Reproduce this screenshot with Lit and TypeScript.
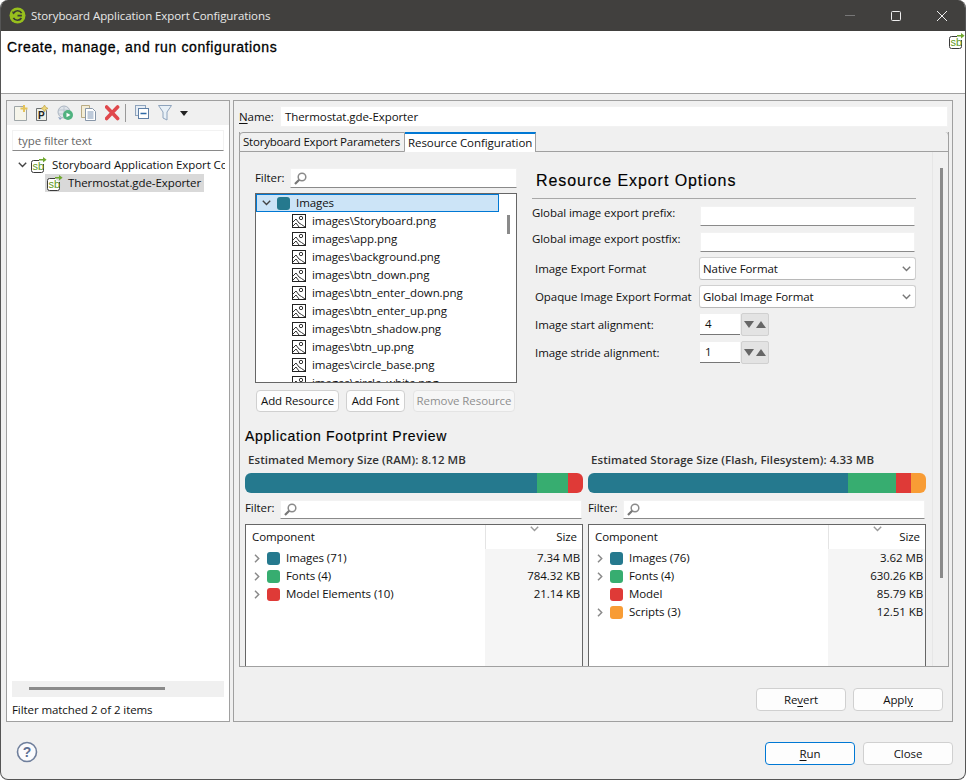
import { LitElement, html, css, svg } from "lit";
import { customElement } from "lit/decorators.js";

const TEAL = "#25798e", GREEN = "#37ad70", RED = "#df3a37", ORANGE = "#f89c35";

const sbIcon = () => svg`<svg class="ico16" width="16" height="16" viewBox="0 0 16 16">
  <path d="M8 3.5H2.5a2 2 0 0 0-2 2v8a2 2 0 0 0 2 2h8a2 2 0 0 0 2-2V7" fill="#fff" stroke="#3a3a3a"/>
  <text x="1.5" y="13.4" font-family="Liberation Sans" font-size="11" fill="#5f9a26">sb</text>
  <path d="M8 2.8h5" stroke="#6fa82e" stroke-width="1.6"/><path d="M12 0l3.6 2.8L12 5.6z" fill="#6fa82e"/>
</svg>`;
const search = () => svg`<svg class="mag" width="13" height="13" viewBox="0 0 13 13">
  <circle cx="8" cy="5" r="3.8" fill="none" stroke="#8a8a8a" stroke-width="1.5"/>
  <path d="M5.2 7.8L1 12" stroke="#777" stroke-width="2.2"/></svg>`;
const chevDown = (c = "#444") => svg`<svg width="9" height="6" viewBox="0 0 9 6"><path d="M.8 .8l3.7 3.7L8.2 .8" fill="none" stroke="${c}" stroke-width="1.4"/></svg>`;
const chevRight = () => svg`<svg width="6" height="9" viewBox="0 0 6 9"><path d="M1 .8l3.7 3.7L1 8.2" fill="none" stroke="#8a8a8a" stroke-width="1.5"/></svg>`;
const imgIcon = () => svg`<svg width="14" height="14" viewBox="0 0 14 14">
  <rect x=".5" y=".5" width="13" height="13" fill="#fff" stroke="#222"/>
  <circle cx="9" cy="4" r="1.7" fill="none" stroke="#333"/>
  <path d="M1 8l3-3 3 4 2.5 1.5L13 13M1 12l3-3 3 4" fill="none" stroke="#333"/></svg>`;

@customElement("app-root")
export class AppRoot extends LitElement {
  static styles = css`
    :host { display: block; width: 966px; height: 780px; background: #fff; color: #111;
      font-family: "Open Sans", "Noto Sans", sans-serif; font-size: 11.5px; line-height: 16px; letter-spacing: -.08px; }
    * { box-sizing: border-box; }
    svg { display: block; flex: none; }
    .window { width: 966px; height: 780px; border: 1px solid #555; border-top: 0; border-radius: 8px;
      overflow: hidden; background: #f0f0f0; display: flex; flex-direction: column; }
    .titlebar { height: 31px; flex: none; background: #41403e; color: #e8e8e8; display: flex; align-items: center; padding-left: 8px; }
    .titlebar .ttl { margin-left: 5px; }
    .ctrls { margin-left: auto; display: flex; }
    .ctrl { width: 46px; height: 31px; display: flex; align-items: center; justify-content: center; }
    .head { height: 63px; flex: none; background: #fff; border-bottom: 1px solid #a0a0a0; display: flex;
      justify-content: space-between; padding: 7px 0 0 6px; }
    .head svg { margin-top: -5px; }
    .head-t { font-family: "Liberation Sans", sans-serif; font-size: 14px; line-height: 18px; letter-spacing: .62px;
      color: #000; -webkit-text-stroke: .3px #000; }
    .body { height: 628px; flex: none; padding: 6px 12px 0 5px; display: flex; gap: 3px; }
    .left { width: 224px; background: #fff; border: 1px solid #a0a0a0; display: flex; flex-direction: column; }
    .tb { height: 24px; flex: none; background: #f0f0f0; display: flex; align-items: center; padding-left: 6px; }
    .tb .sep { width: 1px; height: 18px; background: #999; }
    .tb .coll { margin-left: 9px; }
    .in { background: #fff; border: 1px solid #f2f2f2; border-bottom: 1px solid #8a8a8a; height: 20px; display: flex; align-items: center; }
    .ftxt { margin: 5px 5px 0 5px; height: 21px; padding-left: 5px; color: #666; }
    .tree { flex: 1; padding: 5px 5px 0 11px; overflow: hidden; }
    .tr { height: 18px; display: flex; align-items: center; white-space: nowrap; }
    .tr .tw { width: 13px; flex: none; }
    .tr span.t { margin-left: 5px; }
    .tr2 { margin-left: 27px; width: 159px; background: #d9d9d9; padding-left: 2px; }
    .clip { overflow: hidden; width: 207px; }
    .hs { margin: 0 5px; height: 16px; flex: none; background: #f0f0f0; padding: 6px 0 0 17px; }
    .hs i { display: block; width: 136px; height: 3px; background: #8a8a8a; }
    .stat { height: 24px; flex: none; display: flex; align-items: center; padding: 2px 0 0 5px; }
    .right { width: 720px; background: #f0f0f0; border: 1px solid #a0a0a0; display: flex; flex-direction: column; padding: 5px 4px 0 5px; }
    .nm { display: flex; height: 21px; align-items: center; flex: none; }
    .nm label { width: 41px; }
    .nm .in { flex: 1; height: 21px; padding-left: 4px; border-bottom-color: #f2f2f2; }
    u { text-underline-offset: 2px; }
    .folder { margin-top: 5px; height: 535px; flex: none; width: 710px; display: flex; flex-direction: column;
      border: 1px solid #a0a0a0; border-top: 0; }
    .tabs { display: flex; height: 20px; flex: none; margin: 0 -1px; }
    .tab { height: 20px; display: flex; align-items: center; white-space: nowrap; }
    .tab1 { width: 166px; padding-left: 3px; letter-spacing: -.22px; background: #f0f0f0; border: 1px solid #a0a0a0; border-radius: 4px 0 0 0; }
    .tab2 { width: 131px; padding-left: 3px; background: #fff; border-top: 2px solid #0078d4; border-right: 1px solid #a0a0a0; }
    .tabfill { flex: 1; border-bottom: 1px solid #a0a0a0; border-right: 1px solid #a0a0a0; border-top-right-radius: 4px; }
    .fbody { flex: 1; display: flex; min-height: 0; overflow: hidden; }
    .scroll { flex: none; width: 692px; padding: 16px 0 0 5px; overflow: hidden; }
    .vbar { flex: 1; border-left: 1px solid #e6e6e6; padding: 16px 0 0 7px; }
    .vbar i { display: block; width: 3px; height: 410px; background: #8a8a8a; }
    .upper { display: grid; grid-template-columns: 262px 384px; column-gap: 15px; padding-left: 10px; }
    .fl { display: flex; align-items: center; height: 20px; }
    .fl label { width: 35px; }
    .fl .in { flex: 1; padding-left: 3px; }
    .list { margin-top: 5px; height: 190px; border: 1px solid #666; background: #fff; overflow: hidden; position: relative; }
    .lrow { height: 18px; display: flex; align-items: center; white-space: nowrap; }
    .lsel { width: 243px; background: #cce4f7; outline: 1px solid #0078d4; outline-offset: -1px; padding-left: 6px; }
    .lsel .sw { margin-left: 6px; margin-right: 6px; }
    .lch { padding-left: 36px; }
    .lch span { margin-left: 6px; }
    .sw { width: 13px; height: 13px; border-radius: 3px; flex: none; }
    .thumb { position: absolute; left: 251px; top: 21px; width: 3px; height: 19px; background: #8a8a8a; }
    .btns { display: flex; margin-top: 7px; padding-left: 1px; }
    .btn { height: 22px; border: 1px solid #d0d0d0; border-radius: 4px; background: #fdfdfd; display: flex; align-items: center; justify-content: center; }
    .b1 { width: 83px; } .b2 { width: 59px; margin-left: 7px; }
    .b3 { width: 102px; margin-left: 8px; color: #8f8f8f; background: #f6f6f6; border-color: #e4e4e4; }
    .h2 { height: 31px; border-bottom: 1px solid #a8a8a8; padding: 4px 0 0 4px; font-family: "Liberation Sans", sans-serif;
      font-size: 16px; line-height: 18px; letter-spacing: .94px; color: #000; -webkit-text-stroke: .15px #000; }
    .frow { display: grid; grid-template-columns: 168px 215px; align-items: center; }
    .frow .in { height: 20px; }
    .frow.t span { align-self: start; margin-top: -1px; }
    .r1 { margin-top: 7px; } .r2 { margin-top: 6px; }
    .frow.c { grid-template-columns: 167px 217px; height: 23px; margin-top: 5px; }
    .lbl3 { padding-left: 3px; }
    .combo { height: 23px; border: 1px solid #d0d0d0; border-bottom-color: #b8b8b8; border-radius: 3px; background: #fff; display: flex; align-items: center;
      justify-content: space-between; padding: 0 4px 0 3px; }
    .frow.s { grid-template-columns: 168px 40px 29px; height: 23px; margin-top: 5px; }
    .sin { height: 21px; background: #fff; border-bottom: 1px solid #777; padding-left: 5px; display: flex; align-items: center; }
    .sbtn { height: 23px; margin-left: 1px; background: #e3e3e3; border: 1px solid #d0d0d0; border-radius: 2px; display: flex; align-items: center; justify-content: center; gap: 2px; }
    .fp { margin-top: 16px; font-family: "Liberation Sans", sans-serif; font-size: 14px; line-height: 16px; letter-spacing: .72px;
      color: #000; -webkit-text-stroke: .15px #000; }
    .cols { display: grid; grid-template-columns: 338px 338px; column-gap: 5px; margin-top: 8px; }
    .est { padding-left: 3px; height: 16px; font-weight: 600; color: #333; letter-spacing: .06px; }
    .bar { margin-top: 5px; height: 20px; border-radius: 6px; overflow: hidden; display: flex; }
    .bar i { display: block; height: 20px; }
    .col .fl { margin-top: 6px; }
    .col .fl label { padding-bottom: 2px; }
    .col .fl .in { margin-right: 1px; height: 19px; }
    .tbl { margin-top: 5px; height: 170px; border: 1px solid #666; background: #fff; display: grid;
      grid-template-columns: 239px 97px; grid-template-rows: 24px 1fr; }
    .th1 { display: flex; align-items: center; padding-left: 6px; }
    .th2 { border-left: 1px solid #e4e4e4; display: flex; align-items: center; justify-content: flex-end; padding-right: 5px; position: relative; }
    .sort { position: absolute; left: 44px; top: 1px; }
    .tc2 { background: #f5f5f5; text-align: right; padding-right: 2px; }
    .row { height: 18px; display: flex; align-items: center; padding-left: 8px; white-space: nowrap; }
    .row .x { width: 13px; flex: none; }
    .row .sw { margin-right: 6px; }
    .val { height: 18px; line-height: 18px; }
    .act { display: flex; justify-content: flex-end; gap: 7px; padding: 21px 5px 0 0; }
    .act .btn { width: 90px; height: 23px; }
    .foot { flex: 1; display: flex; align-items: flex-start; padding: 20px 12px 0 15px; }
    .foot svg { margin-top: -1px; }
    .foot .sp { flex: 1; }
    .foot .btn { width: 90px; height: 23px; }
    .run { border-color: #0078d4 !important; margin-right: 8px; border-width: 1.5px; }
  `;

  render() {
    const files = ["Storyboard","app","background","btn_down","btn_enter_down","btn_enter_up","btn_shadow","btn_up","circle_base","circle_white"];
    return html`<div class="window">
      <div class="titlebar">
        <svg width="17" height="17" viewBox="0 0 17 17"><circle cx="8.5" cy="8.5" r="8" fill="#97bf1d"/>
          <path d="M12.6 6.2A4.6 4.6 0 0 0 4.6 6M4.4 10.8a4.6 4.6 0 0 0 8 .2M8.5 8.7h4.4" fill="none" stroke="#3a3a34" stroke-width="1.7"/>
          <path d="M3 4.6l3.6.4-2.4 2.6z" fill="#3a3a34"/></svg>
        <span class="ttl">Storyboard Application Export Configurations</span>
        <div class="ctrls">
          <div class="ctrl"><svg width="10" height="1"><rect width="10" height="1" fill="#777"/></svg></div>
          <div class="ctrl"><svg width="10" height="10"><rect x=".5" y=".5" width="9" height="9" rx="1" fill="none" stroke="#eee"/></svg></div>
          <div class="ctrl"><svg width="10" height="10"><path d="M0 0l10 10M10 0L0 10" stroke="#eee"/></svg></div>
        </div>
      </div>
      <div class="head"><span class="head-t">Create, manage, and run configurations</span>${sbIcon()}</div>
      <div class="body">
        <div class="left">
          <div class="tb">
            <svg width="22" height="16" viewBox="0 0 22 16"><path d="M1.5 1.5h9l3 3v11h-12z" fill="#f6f5ea" stroke="#9fa6a8"/><path d="M11 0v7M7.5 3.5h7" stroke="#e4c35a" stroke-width="2"/></svg>
            <svg width="22" height="16" viewBox="0 0 22 16"><path d="M1.5 3.5h8l2 2v10h-10z" fill="#eef0e8" stroke="#6c7072"/><text x="3" y="13.5" font-family="Liberation Sans" font-size="10" font-weight="700" fill="#222">P</text><path d="M9.5 0l1.2 2.2L13 3.4l-2.3 1.2L9.5 7 8.3 4.6 6 3.4l2.3-1.2z" fill="#eed67a" stroke="#b99a36" stroke-width=".6"/></svg>
            <svg width="24" height="16" viewBox="0 0 24 16"><circle cx="7" cy="7" r="6" fill="#dfe4ea" stroke="#aab4c0"/><path d="M2 5h10M2 9h10M7 1v12" stroke="#bdc6d0"/><circle cx="11" cy="10" r="5" fill="#4fb27f"/><path d="M9.5 7.8l4 2.2-4 2.2z" fill="#fff"/><path d="M1 12l4 1-2 2z" fill="#8ea3c2"/></svg>
            <svg width="24" height="16" viewBox="0 0 24 16"><path d="M.5 .5h8v12h-8z" fill="#f4edd6" stroke="#b9ab84"/><path d="M4.5 3.5h7l3 3v9h-10z" fill="#fff" stroke="#8796a8"/><path d="M6.5 7h6M6.5 9h6M6.5 11h6M6.5 13h6" stroke="#7f96b5"/></svg>
            <svg width="20" height="16" viewBox="0 0 20 16"><path d="M1.6 2l11 11.5M12.6 2L1.6 13.5" stroke="#e0484c" stroke-width="3.6" stroke-linecap="round"/></svg>
            <div class="sep"></div>
            <svg class="coll" width="23" height="16" viewBox="0 0 23 16"><rect x=".5" y=".5" width="10" height="10" fill="#e6edf5" stroke="#8ea3bc"/><rect x="3.5" y="3.5" width="10" height="10" fill="#fff" stroke="#5f7fa6"/><path d="M5.5 8.5h6" stroke="#2f6aa6" stroke-width="1.3"/></svg>
            <svg width="22" height="16" viewBox="0 0 22 16"><path d="M.5 .5h13L9 7v8l-4-2V7z" fill="#e8f0f7" stroke="#8ea3bc"/></svg>
            <svg width="8" height="5" viewBox="0 0 8 5"><path d="M0 0h8L4 5z" fill="#222"/></svg>
          </div>
          <div class="in ftxt">type filter text</div>
          <div class="tree clip2">
            <div class="tr clip"><div class="tw">${chevDown()}</div>${sbIcon()}<span class="t">Storyboard Application Export Configurations</span></div>
            <div class="tr tr2">${sbIcon()}<span class="t">Thermostat.gde-Exporter</span></div>
          </div>
          <div class="hs"><i></i></div>
          <div class="stat">Filter matched 2 of 2 items</div>
        </div>
        <div class="right">
          <div class="nm"><label><u>N</u>ame:</label><div class="in">Thermostat.gde-Exporter</div></div>
          <div class="folder">
            <div class="tabs"><div class="tab tab1">Storyboard Export Parameters</div><div class="tab tab2">Resource Configuration</div><div class="tabfill"></div></div>
            <div class="fbody">
              <div class="scroll">
                <div class="upper">
                  <div>
                    <div class="fl"><label>Filter:</label><div class="in">${search()}</div></div>
                    <div class="list">
                      <div class="lrow lsel">${chevDown()}<div class="sw" style="background:${TEAL}"></div>Images</div>
                      ${files.map(f => html`<div class="lrow lch">${imgIcon()}<span>images\\${f}.png</span></div>`)}
                      <div class="thumb"></div>
                    </div>
                    <div class="btns"><div class="btn b1">Add Resource</div><div class="btn b2">Add Font</div><div class="btn b3">Remove Resource</div></div>
                  </div>
                  <div>
                    <div class="h2">Resource Export Options</div>
                    <div class="frow t r1"><span>Global image export prefix:</span><div class="in"></div></div>
                    <div class="frow t r2"><span>Global image export postfix:</span><div class="in"></div></div>
                    <div class="frow c"><span class="lbl3">Image Export Format</span><div class="combo">Native Format ${chevDown("#777")}</div></div>
                    <div class="frow c"><span class="lbl3">Opaque Image Export Format</span><div class="combo">Global Image Format ${chevDown("#777")}</div></div>
                    ${[["Image start alignment:","4"],["Image stride alignment:","1"]].map(([l,v]) => html`
                      <div class="frow s"><span class="lbl3">${l}</span><div class="sin">${v}</div><div class="sbtn">
                        <svg width="10" height="7"><path d="M0 0h10L5 7z" fill="#666"/></svg>
                        <svg width="10" height="7"><path d="M0 7h10L5 0z" fill="#666"/></svg></div></div>`)}
                  </div>
                </div>
                <div class="fp">Application Footprint Preview</div>
                <div class="cols">
                  ${this.col("Estimated Memory Size (RAM): 8.12 MB", [[292,TEAL],[31,GREEN],[15,RED]], [
                    [TEAL,"Images (71)","7.34 MB",1],[GREEN,"Fonts (4)","784.32 KB",1],[RED,"Model Elements (10)","21.14 KB",1]])}
                  ${this.col("Estimated Storage Size (Flash, Filesystem): 4.33 MB", [[260,TEAL],[48,GREEN],[15,RED],[15,ORANGE]], [
                    [TEAL,"Images (76)","3.62 MB",1],[GREEN,"Fonts (4)","630.26 KB",1],[RED,"Model","85.79 KB",0],[ORANGE,"Scripts (3)","12.51 KB",1]])}
                </div>
              </div>
              <div class="vbar"><i></i></div>
            </div>
          </div>
          <div class="act"><div class="btn">Re<u>v</u>ert</div><div class="btn">Appl<u>y</u></div></div>
        </div>
      </div>
      <div class="foot">
        <svg width="22" height="22" viewBox="0 0 22 22"><circle cx="11" cy="11" r="9.5" fill="#fbfbfd" stroke="#6f7f9c" stroke-width="1.6"/><text x="11" y="16" text-anchor="middle" font-family="Liberation Sans" font-size="14" font-weight="700" fill="#5f7093">?</text></svg>
        <div class="sp"></div>
        <div class="btn run"><u>R</u>un</div><div class="btn">Close</div>
      </div>
    </div>`;
  }

  col(title: string, segs: any[], rows: any[]) {
    return html`<div class="col">
      <div class="est">${title}</div>
      <div class="bar">${segs.map(([w, c]) => html`<i style="width:${w}px;background:${c}"></i>`)}</div>
      <div class="fl"><label>Filter:</label><div class="in">${search()}</div></div>
      <div class="tbl">
        <div class="th1">Component</div>
        <div class="th2"><span class="sort">${chevDown("#999")}</span>Size</div>
        <div class="tc1">${rows.map(([c, t, , e]) => html`<div class="row"><div class="x">${e ? chevRight() : ""}</div><div class="sw" style="background:${c}"></div>${t}</div>`)}</div>
        <div class="tc2">${rows.map(([, , v]) => html`<div class="val">${v}</div>`)}</div>
      </div>
    </div>`;
  }
}
